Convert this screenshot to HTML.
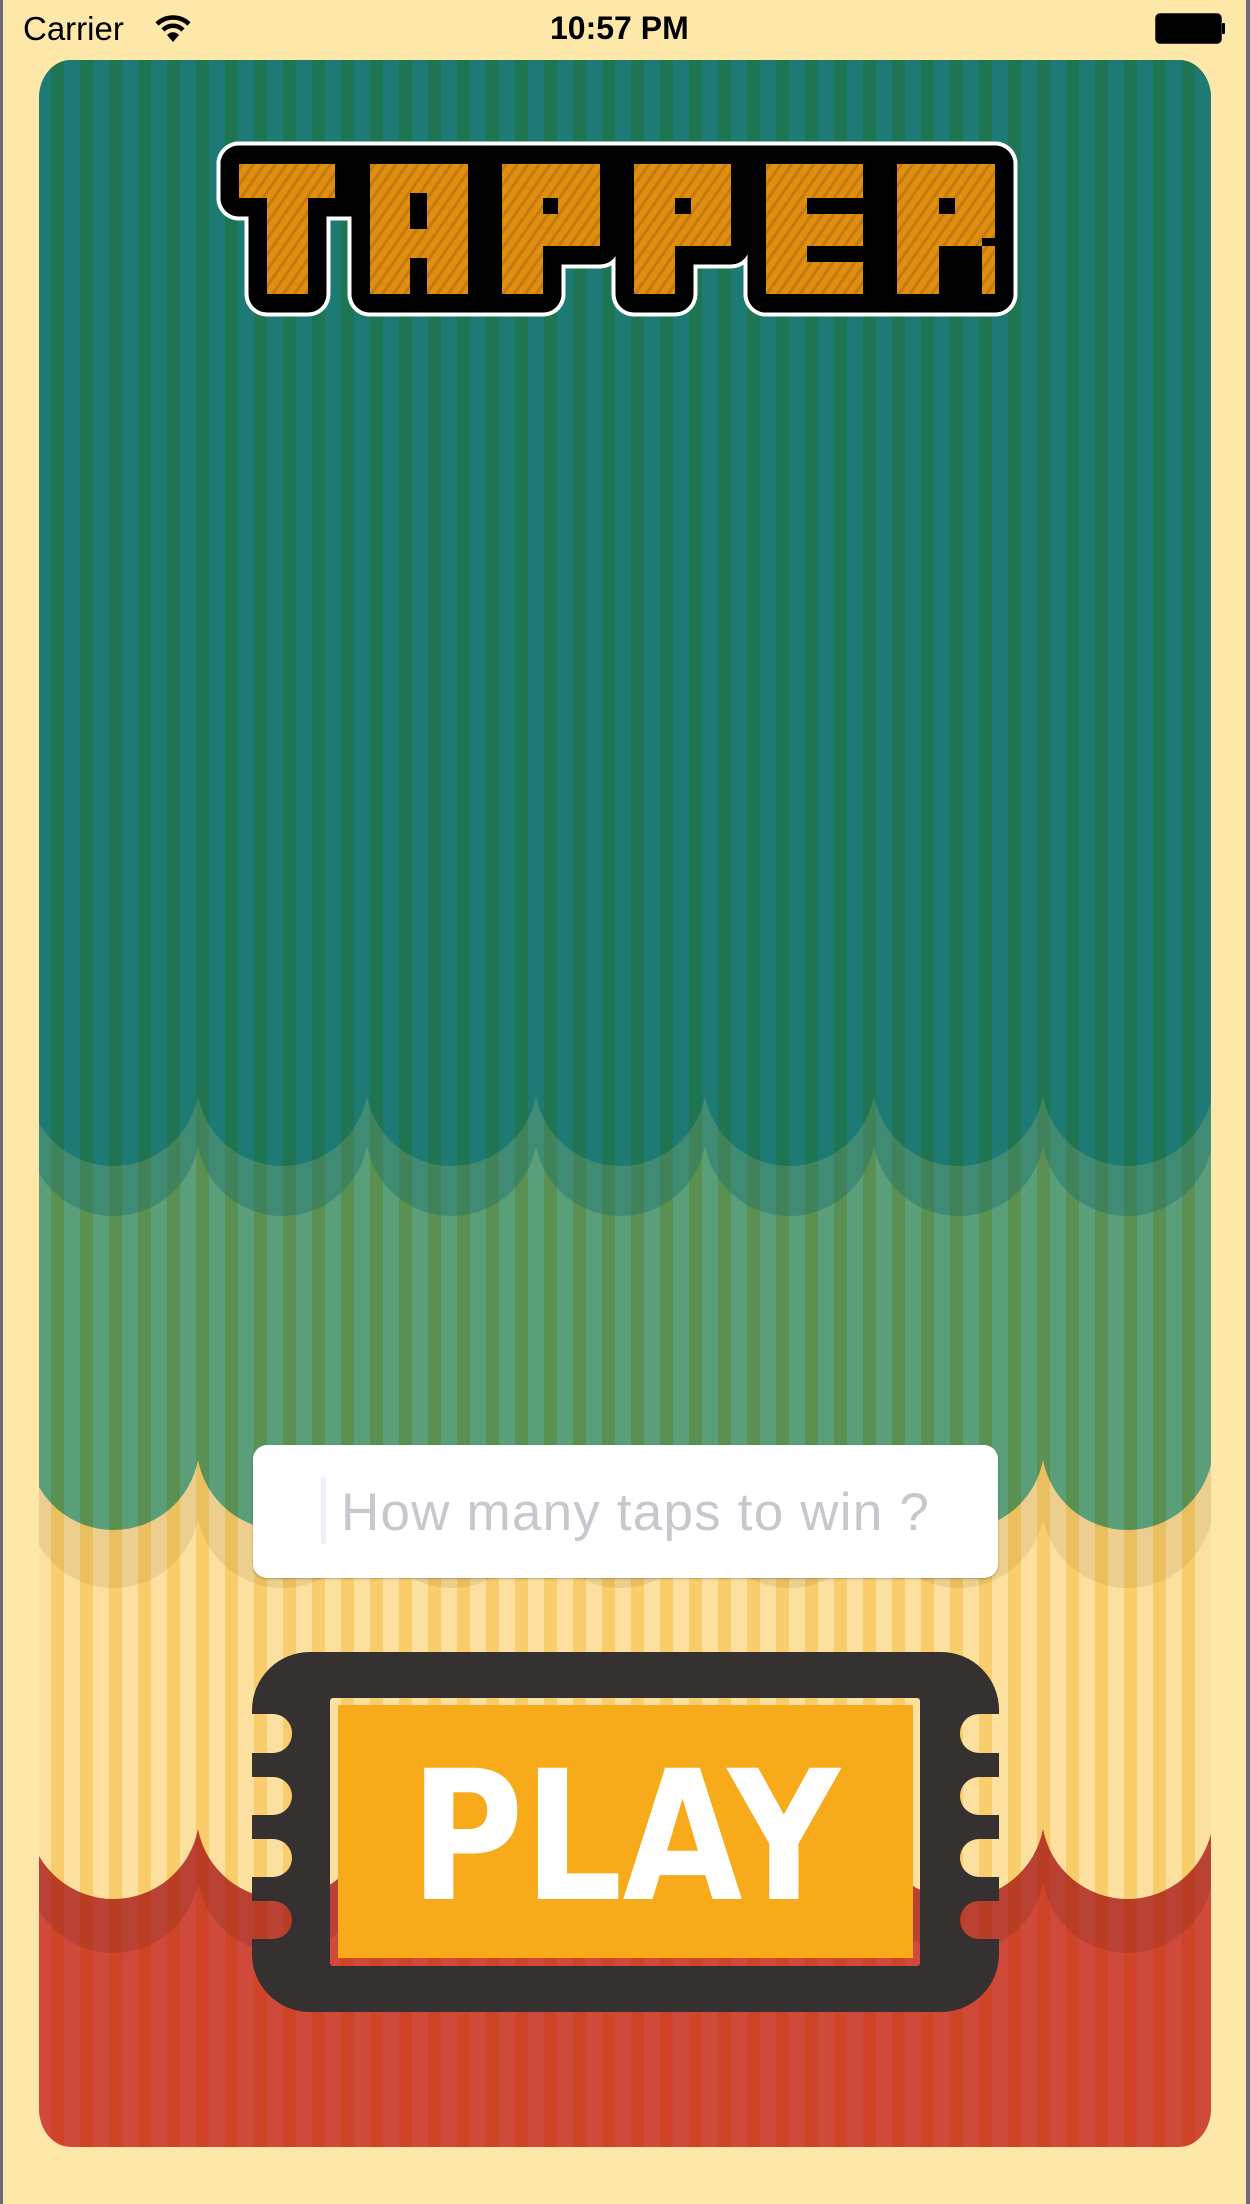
<!DOCTYPE html>
<html><head><meta charset="utf-8"><style>
html,body{margin:0;padding:0}
body{width:1250px;height:2204px;background:#fee8a9;position:relative;overflow:hidden;font-family:"Liberation Sans",sans-serif}
.edgeL{position:absolute;left:0;top:0;width:3px;height:2204px;background:#6b6b73}
.edgeR{position:absolute;right:0;top:0;width:4px;height:2204px;background:#6e6a80}
.sb{position:absolute;top:0;left:0;width:1250px;height:59px}
.carrier{position:absolute;left:23px;top:10px;font-size:33px;color:#000}
.time{position:absolute;left:550px;top:10px;font-size:32px;font-weight:bold;color:#000;letter-spacing:0px}
.panel{position:absolute;left:39px;top:60px}
.input{position:absolute;left:253px;top:1445px;width:745px;height:133px;background:#fff;border-radius:14px;box-shadow:0 1px 2px rgba(0,0,0,.25)}
.ph{position:absolute;left:88px;top:37px;font-size:53px;letter-spacing:1.2px;color:#c8c7cd;white-space:nowrap}
.caret{position:absolute;left:68px;top:32px;width:5px;height:67px;background:#eef1fb;border-radius:2px}
</style></head><body>
<div class="edgeL"></div><div class="edgeR"></div>
<div class="sb">
  <div class="carrier">Carrier</div>
  <svg style="position:absolute;left:154px;top:14px" width="38" height="30" viewBox="0 0 38 30">
    <path d="M3 10 A23 23 0 0 1 35 10" stroke="#000" stroke-width="4.5" fill="none"/>
    <path d="M9 16 A14 14 0 0 1 29 16" stroke="#000" stroke-width="4.5" fill="none"/>
    <path d="M13 21 L19 28 L25 21 A8 8 0 0 0 13 21Z" fill="#000"/>
  </svg>
  <div class="time">10:57 PM</div>
  <svg style="position:absolute;left:1155px;top:13px" width="72" height="32" viewBox="0 0 72 32">
    <rect x="1" y="1" width="65" height="29" rx="4" fill="#000" stroke="#000" stroke-width="1.5"/>
    <rect x="67" y="10" width="3" height="11" rx="1" fill="#000"/>
  </svg>
</div>

<svg class="panel" width="1172" height="2087" viewBox="0 0 1172 2087">
<defs>
  <clipPath id="pc"><rect x="0" y="0" width="1172" height="2087" rx="32" ry="38"/></clipPath>
  <pattern id="pTeal" width="29" height="10" patternUnits="userSpaceOnUse"><rect width="29" height="10" fill="#1e7a74"/><rect x="12" width="13" height="10" fill="#1f7452"/></pattern>
  <pattern id="pGreen" width="29" height="10" patternUnits="userSpaceOnUse"><rect width="29" height="10" fill="#5a9e7a"/><rect x="12" width="13" height="10" fill="#5a9153"/></pattern>
  <pattern id="pYel" width="29" height="10" patternUnits="userSpaceOnUse"><rect width="29" height="10" fill="#fce0a0"/><rect x="12" width="13" height="10" fill="#f9cd6b"/></pattern>
  <pattern id="pRed" width="29" height="10" patternUnits="userSpaceOnUse"><rect width="29" height="10" fill="#cf4a3b"/><rect x="12" width="13" height="10" fill="#cf4427"/></pattern>
  <pattern id="pOr" width="9" height="9" patternUnits="userSpaceOnUse" patternTransform="rotate(35)"><rect width="9" height="9" fill="#e08e0e"/><rect width="3" height="9" fill="#c47a12"/></pattern>
  <path id="sc" d="M-10,0 A86 86 0 0 0 159,0 A86 86 0 0 0 328,0 A86 86 0 0 0 497,0 A86 86 0 0 0 666,0 A86 86 0 0 0 835,0 A86 86 0 0 0 1004,0 A86 86 0 0 0 1173,0 A86 86 0 0 0 1342,0 L1342,-2200 L-10,-2200 Z"/>
  <g id="shapes">
    <polygon points="200,104 296,104 296,138 269,138 269,234 228,234 228,138 200,138"/>
    <rect x="331" y="104" width="98" height="130"/>
    <polygon points="463,104 561,104 561,186 504,186 504,234 463,234"/>
    <polygon points="595,104 692,104 692,186 636,186 636,234 595,234"/>
    <rect x="727" y="104" width="97" height="130"/>
    <rect x="858" y="104" width="98" height="130"/>
    <rect x="200" y="104" width="756" height="34"/>
    <rect x="331" y="186" width="173" height="48"/>
    <rect x="727" y="186" width="229" height="48"/>
  </g>
  <mask id="tm" maskUnits="userSpaceOnUse" x="0" y="0" width="1172" height="2087">
    <rect x="213" y="1592" width="747" height="360" rx="58" fill="#fff"/>
    <rect x="190" y="1654" width="63" height="39" rx="19" fill="#000"/>
    <rect x="190" y="1717" width="63" height="38" rx="19" fill="#000"/>
    <rect x="190" y="1779" width="63" height="38" rx="19" fill="#000"/>
    <rect x="190" y="1841" width="63" height="38" rx="19" fill="#000"/>
    <rect x="921" y="1654" width="63" height="39" rx="19" fill="#000"/>
    <rect x="921" y="1717" width="63" height="38" rx="19" fill="#000"/>
    <rect x="921" y="1779" width="63" height="38" rx="19" fill="#000"/>
    <rect x="921" y="1841" width="63" height="38" rx="19" fill="#000"/>
    <rect x="291" y="1638" width="590" height="268" rx="3" fill="#000"/>
  </mask>
</defs>
<g clip-path="url(#pc)">
  <rect width="1172" height="2087" fill="url(#pRed)"/>
  <use href="#sc" transform="translate(0,1823)" fill="#000" opacity="0.1"/>
  <use href="#sc" transform="translate(0,1769)" fill="url(#pYel)"/>
  <use href="#sc" transform="translate(0,1458)" fill="#7a5a10" opacity="0.12"/>
  <use href="#sc" transform="translate(0,1400)" fill="url(#pGreen)"/>
  <use href="#sc" transform="translate(0,1086)" fill="#1a6e68" opacity="0.4"/>
  <use href="#sc" transform="translate(0,1036)" fill="url(#pTeal)"/>

  <g id="letters">
    <use href="#shapes" stroke="#fff" stroke-width="45" stroke-linejoin="round" fill="#fff"/>
    <use href="#shapes" stroke="#000" stroke-width="37" stroke-linejoin="round" fill="#000"/>
    <g fill="url(#pOr)">
      <polygon points="200,104 296,104 296,138 269,138 269,234 228,234 228,138 200,138"/>
      <rect x="331" y="104" width="98" height="130"/>
      <polygon points="463,104 561,104 561,186 504,186 504,234 463,234"/>
      <polygon points="595,104 692,104 692,186 636,186 636,234 595,234"/>
      <rect x="727" y="104" width="97" height="130"/>
      <rect x="858" y="104" width="98" height="130"/>
    </g>
    <g fill="#000">
      <rect x="371" y="133" width="17" height="36"/>
      <rect x="371" y="198" width="17" height="36"/>
      <rect x="504" y="138" width="15" height="16"/>
      <rect x="636" y="138" width="16" height="16"/>
      <rect x="768" y="138" width="56" height="16"/>
      <rect x="768" y="186" width="56" height="16"/>
      <rect x="900" y="138" width="16" height="16"/>
      <rect x="900" y="186" width="43" height="48"/>
      <rect x="943" y="178" width="13" height="8"/>
    </g>
    <text x="578" y="234" font-size="10" fill="none" text-anchor="middle">TAPPER</text>
  </g>

  <rect x="180" y="1580" width="820" height="400" fill="#353131" mask="url(#tm)"/>
  <rect x="299" y="1645" width="575" height="253" fill="#f8ab1a"/>
  <text x="371" y="1839" font-family="'DejaVu Sans','Liberation Sans',sans-serif" font-weight="bold" font-size="180" fill="#fff" textLength="430" lengthAdjust="spacingAndGlyphs">PLAY</text>
</g>
</svg>

<div class="input"><div class="caret"></div><div class="ph">How many taps to win ?</div></div>
</body></html>
